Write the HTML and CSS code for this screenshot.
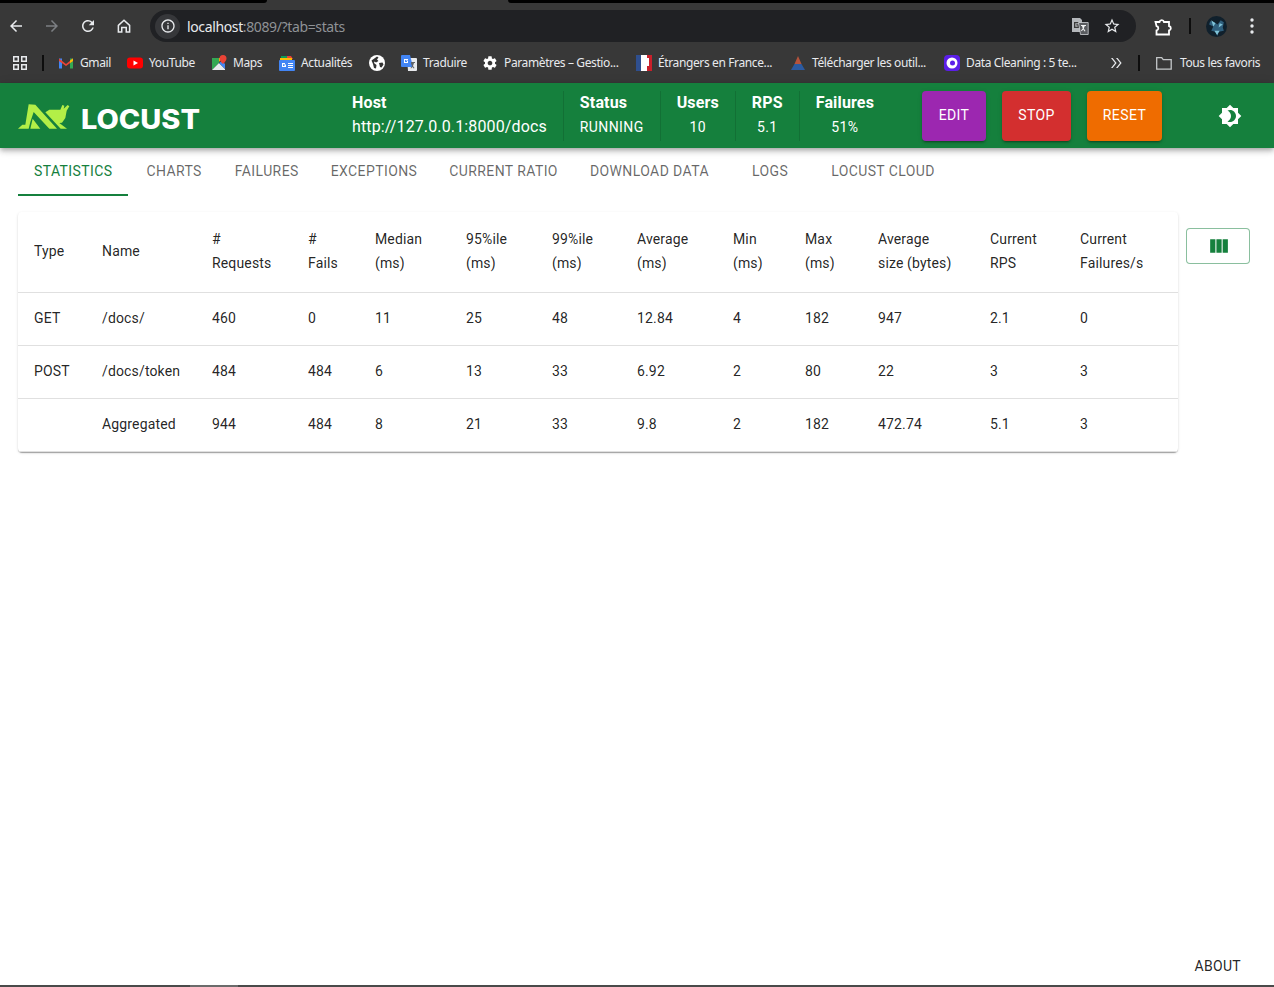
FILE: index.html
```html
<!DOCTYPE html>
<html lang="fr">
<head>
<meta charset="utf-8">
<title>Locust</title>
<link rel="stylesheet" href="styles.css">
</head>
<body>
<div class="browser">
  <div class="tabstrip"><span class="strip-a"></span><span class="strip-b"></span><span class="strip-c"></span></div>
  <div class="toolbar">
    <svg class="nav" viewBox="0 0 24 24"><path d="M20 11H7.830l5.590-5.590L12 4l-8 8 8 8 1.410-1.410L7.830 13H20v-2z"/></svg>
    <svg class="nav dim" viewBox="0 0 24 24"><path d="M12 4l-1.410 1.410L16.170 11H4v2h12.170l-5.580 5.590L12 20l8-8z"/></svg>
    <svg class="nav" viewBox="0 0 24 24"><path d="M17.650 6.350A7.958 7.958 0 0 0 12 4c-4.420 0-7.990 3.580-7.990 8s3.570 8 7.990 8c3.730 0 6.840-2.550 7.730-6h-2.080A5.990 5.990 0 0 1 12 18c-3.310 0-6-2.690-6-6s2.690-6 6-6c1.660 0 3.140.690 4.220 1.780L13 11h7V4l-2.350 2.350z"/></svg>
    <svg class="nav" viewBox="0 0 24 24"><path fill-rule="evenodd" d="M12 3L3.500 10.600V21H10v-6h4v6h6.500V10.600zM12 5.700l6.500 5.800V19H16v-6H8v6H5.500v-7.500z"/></svg>
    <div class="omnibox">
      <span class="info"><svg viewBox="0 0 24 24"><path d="M11 7h2v2h-2zm0 4h2v6h-2zm1-9C6.480 2 2 6.480 2 12s4.480 10 10 10 10-4.480 10-10S17.520 2 12 2zm0 18c-4.410 0-8-3.590-8-8s3.590-8 8-8 8 3.590 8 8-3.590 8-8 8z"/></svg></span>
      <span class="url"><span class="url-host">localhost</span><span class="url-rest">:8089/?tab=stats</span></span>
      <svg class="translate" viewBox="0 0 18 18"><path class="tr-back" d="M1 1h8l2 2v12H1z"/><path class="tr-g" d="M3 5h5v1.200H4.300v3.600h2.400V8.400H5.300V7.300H8V11H3z"/><path class="tr-front" d="M7.500 5.500h9.700v12H9.500z"/><path class="tr-mark" d="M10 8h5v1h-1.200l-1 2.500 1.700 2.500-.8.600-1.500-2-1.500 1.700-.7-.7 1.800-2-.8-2.600H10z"/></svg>
      <svg class="star" viewBox="0 0 24 24"><path d="M22 9.240l-7.190-.620L12 2 9.190 8.630 2 9.240l5.460 4.730L5.820 21 12 17.270 18.180 21l-1.630-7.030L22 9.240zM12 15.400l-3.760 2.270 1-4.280-3.320-2.880 4.380-.380L12 6.100l1.710 4.040 4.380.380-3.320 2.880 1 4.280L12 15.400z"/></svg>
    </div>
    <svg class="ext" viewBox="0 0 20 20"><path d="M2.500 6h4a2.300 2.300 0 0 1 4.500 0h5v4a2.300 2.300 0 0 1 0 4.500v4H3.500v-4a2.300 2.300 0 0 0 0-4.500z"/></svg>
    <span class="sep"></span>
    <svg class="avatar" viewBox="0 0 20 20"><circle class="av-bg" cx="10" cy="10" r="10"/><path class="av-a" d="M4 5l4 1 3 2 3-4 3 2-1 5 1 3-5 1-1 4-2-4-4-1 2-4-4-2z"/><path class="av-b" d="M5 4l4 3-2 3zM13 7l3 1-4 3zM8 14h5l-2.500 4z"/></svg>
    <svg class="menu" viewBox="0 0 4 16"><circle cx="2" cy="2" r="1.700"/><circle cx="2" cy="8" r="1.700"/><circle cx="2" cy="14" r="1.700"/></svg>
  </div>
  <div class="bookmarks">
    <svg class="apps" viewBox="0 0 14 14"><path d="M0 0h6v6H0zM1.500 1.500v3h3v-3zM8 0h6v6H8zM9.500 1.500v3h3v-3zM0 8h6v6H0zM1.500 9.500v3h3v-3zM8 8h6v6H8zM9.500 9.500v3h3v-3z" fill-rule="evenodd"/></svg>
    <span class="sep bm-sep"></span>
    <div class="bm b-gmail"><svg viewBox="0 0 16 16"><path fill="#4285f4" d="M1 3.500h3v10H1z"/><path fill="#34a853" d="M12 3.500h3v10h-3z"/><path fill="#ea4335" d="M1 3.500 8 9l7-5.500V6L8 11 1 6z"/><path fill="#fbbc04" d="M12 5.500l3-2V6l-3 2z"/></svg><span>Gmail</span></div>
    <div class="bm b-yt"><svg viewBox="0 0 16 16"><rect fill="#f00" y="2.500" width="16" height="11" rx="3"/><path fill="#fff" d="M6.500 5.500 11 8l-4.500 2.500z"/></svg><span>YouTube</span></div>
    <div class="bm b-maps"><svg viewBox="0 0 16 16"><path fill="#34a853" d="M1 3h7v5l-7 7z"/><path fill="#e8eaed" d="M1 15l7-7 6 6v1z"/><path fill="#4285f4" d="M8 8l6 6V9l-3-3z"/><path fill="#fbbc04" d="M8 3h3l-3 4z"/><path fill="#ea4335" d="M12 0a3.500 3.500 0 0 1 3.500 3.500C15.500 6 12 9 12 9S8.500 6 8.500 3.500A3.500 3.500 0 0 1 12 0z"/></svg><span>Maps</span></div>
    <div class="bm b-news"><svg viewBox="0 0 16 16"><path fill="#0c9d58" d="M2 1h9v4H2z"/><path fill="#ea4335" d="M8 1h4l2 3H8z"/><path fill="#fbbc04" d="M1 3h12v3H1z"/><rect fill="#4285f4" y="5" width="16" height="11" rx="1"/><path fill="#fff" d="M3 8h3v1H4v2h1.500v-1H4.500V9.500H7V12H3zM9 8h5v1H9zM9 10h5v1H9zM9 12h5v1H9z"/></svg><span>Actualités</span></div>
    <div class="bm b-globe"><svg viewBox="0 0 16 16"><circle fill="#fff" cx="8" cy="8" r="8"/><path fill="#333" d="M2.500 5.500 6 3l2-1.500 1.500 1L8 4.500 9.500 6 7 7.500 5.500 6.500 5 8l2.500 2-.5 3.500L5 13 4 9zM10 8l3.500-.5 1 2-2 3-1.500-.5z"/></svg></div>
    <div class="bm b-tr"><svg viewBox="0 0 16 16"><path fill="#e8eaed" d="M6 3h9a1 1 0 0 1 1 1v11a1 1 0 0 1-1 1H7z"/><path fill="#4285f4" d="M1 0h8l3 12H1a1 1 0 0 1-1-1V1a1 1 0 0 1 1-1z"/><path fill="#fff" d="M3 4h4v1H4v2h2V6H5V5.500h2V8H3z"/><path fill="#5f6368" d="M10 7h4v1h-1l-1 3 1.500 2-.8.500-1.200-1.500-1.500 1.500-.500-.6 1.500-1.600-.8-2.300H10z"/></svg><span>Traduire</span></div>
    <div class="bm b-gear"><svg viewBox="0 0 24 24"><path fill="#fff" d="M19.430 12.980c.04-.32.07-.64.07-.98s-.03-.66-.07-.98l2.110-1.650c.19-.15.240-.42.120-.64l-2-3.460c-.12-.22-.39-.3-.61-.22l-2.490 1c-.52-.4-1.080-.73-1.690-.98l-.38-2.650A.488.488 0 0 0 14 2h-4c-.25 0-.46.18-.49.420l-.38 2.650c-.61.25-1.170.59-1.690.98l-2.490-1c-.23-.09-.49 0-.61.22l-2 3.460c-.13.22-.07.49.12.640l2.110 1.650c-.04.32-.07.65-.07.98s.03.66.07.98l-2.110 1.650c-.19.15-.24.42-.12.64l2 3.460c.12.22.39.3.61.22l2.490-1c.52.4 1.080.73 1.690.98l.38 2.650c.03.24.24.42.49.42h4c.25 0 .46-.18.49-.42l.38-2.650c.61-.25 1.170-.59 1.690-.98l2.490 1c.23.09.49 0 .61-.22l2-3.460c.12-.22.07-.49-.12-.64l-2.110-1.650zM12 15.500c-1.930 0-3.500-1.570-3.500-3.500s1.570-3.500 3.500-3.500 3.500 1.570 3.500 3.500-1.570 3.500-3.500 3.500z"/></svg><span>Paramètres – Gestio...</span></div>
    <div class="bm b-fr"><svg viewBox="0 0 16 16"><path fill="#2f4f8f" d="M0 0h5v16H0z"/><path fill="#fff" d="M5 0h6v16H5z"/><path fill="#c8202b" d="M11 0h5v16h-5z"/><path fill="#fff" d="M8 3h5v8H9z"/></svg><span>Étrangers en France...</span></div>
    <div class="bm b-dl"><svg viewBox="0 0 16 16"><path fill="#b5533c" d="M8 1l3.500 8h-7z"/><path fill="#2c5aa0" d="M4.500 9h7L15 15H1z"/></svg><span>Télécharger les outil...</span></div>
    <div class="bm b-data"><svg viewBox="0 0 16 16"><rect fill="#5b1ee8" width="16" height="16" rx="4"/><circle fill="#fff" cx="8" cy="8" r="5.500"/><circle fill="#5b1ee8" cx="8.500" cy="8" r="2.500"/></svg><span>Data Cleaning : 5 te...</span></div>
    <svg class="more" viewBox="0 0 12 10"><path d="M1 0l4 5-4 5h1.600l4-5-4-5zM6 0l4 5-4 5h1.600l4-5-4-5z"/></svg>
    <span class="sep bm-sep2"></span>
    <div class="bm b-all"><svg class="folder" viewBox="0 0 16 14"><path d="M.7 1.700h5l1.500 2h8v9.500H.7z"/></svg><span>Tous les favoris</span></div>
  </div>
</div>

<header class="app-bar">
  <div class="logo">
    <svg class="logo-mark" viewBox="0 0 192 114"><path d="M18 92 31 80H40L50 19 70 20 135 92H112L65 42 55 72 50 92zM62 62 85 92H55zM100 43 112 35H145L151 21 157 23 155 32 167 21 172 25 164 38 160 60 150 74 142 75 165 92H146z"/></svg>
    <span class="logo-text">LOCUST</span>
  </div>
  <div class="stats">
    <div class="stat stat-left"><b>Host</b><span class="stat-big">http://127.0.0.1:8000/docs</span></div>
    <div class="stat stat-left"><b>Status</b><span class="stat-val">RUNNING</span></div>
    <div class="stat"><b>Users</b><span class="stat-val">10</span></div>
    <div class="stat"><b>RPS</b><span class="stat-val">5.1</span></div>
    <div class="stat"><b>Failures</b><span class="stat-val">51%</span></div>
  </div>
  <div class="actions">
    <button class="btn btn-edit">EDIT</button>
    <button class="btn btn-stop">STOP</button>
    <button class="btn btn-reset">RESET</button>
  </div>
  <svg class="theme" viewBox="0 0 24 24"><path d="M20 8.690V4h-4.690L12 .69 8.690 4H4v4.690L.69 12 4 15.310V20h4.690L12 23.310 15.310 20H20v-4.690L23.310 12 20 8.690zM12 18c-.89 0-1.740-.2-2.500-.55C11.560 16.500 13 14.420 13 12s-1.440-4.500-3.500-5.450C10.260 6.200 11.110 6 12 6c3.310 0 6 2.690 6 6s-2.690 6-6 6z"/></svg>
</header>

<nav class="tabs">
  <a class="tab active">STATISTICS</a>
  <a class="tab tab-charts">CHARTS</a>
  <a class="tab">FAILURES</a>
  <a class="tab">EXCEPTIONS</a>
  <a class="tab">CURRENT RATIO</a>
  <a class="tab">DOWNLOAD DATA</a>
  <a class="tab tab-logs">LOGS</a>
  <a class="tab tab-cloud">LOCUST CLOUD</a>
</nav>

<main class="content">
  <div class="table-card">
    <table>
      <thead>
        <tr>
          <th class="c1">Type</th><th class="c2">Name</th><th class="c3">#<br>Requests</th><th class="c4">#<br>Fails</th><th class="c5">Median<br>(ms)</th><th class="c6">95%ile<br>(ms)</th><th class="c7">99%ile<br>(ms)</th><th class="c8">Average<br>(ms)</th><th class="c9">Min<br>(ms)</th><th class="c10">Max<br>(ms)</th><th class="c11">Average<br>size (bytes)</th><th class="c12">Current<br>RPS</th><th class="c13">Current<br>Failures/s</th>
        </tr>
      </thead>
      <tbody>
        <tr><td>GET</td><td>/docs/</td><td>460</td><td>0</td><td>11</td><td>25</td><td>48</td><td>12.84</td><td>4</td><td>182</td><td>947</td><td>2.1</td><td>0</td></tr>
        <tr><td>POST</td><td>/docs/token</td><td>484</td><td>484</td><td>6</td><td>13</td><td>33</td><td>6.92</td><td>2</td><td>80</td><td>22</td><td>3</td><td>3</td></tr>
        <tr><td></td><td>Aggregated</td><td>944</td><td>484</td><td>8</td><td>21</td><td>33</td><td>9.8</td><td>2</td><td>182</td><td>472.74</td><td>5.1</td><td>3</td></tr>
      </tbody>
    </table>
  </div>
  <button class="columns-btn"><svg viewBox="0 0 24 24"><path d="M10 18h5V5h-5v13zm-6 0h5V5H4v13zM16 5v13h5V5h-5z"/></svg></button>
</main>

<footer class="foot"><a class="about">ABOUT</a></footer>
<div class="taskbar"><span class="taskbar-thumb"></span></div>
</body>
</html>
```
FILE: styles.css
```css
* { box-sizing: border-box; }
html, body { margin: 0; height: 987px; }
body {
  width: 1274px;
  overflow: hidden;
  display: flex;
  flex-direction: column;
  background: #fff;
  font-family: Roboto, "Liberation Sans", sans-serif;
  color: rgba(0, 0, 0, .87);
}

/* browser chrome */
.browser { height: 83px; flex: none; background: #383838; color: #e8eaed; }
.tabstrip { height: 3px; display: flex; }
.strip-a { width: 267px; background: #000; border-bottom-right-radius: 3px; }
.strip-b { width: 241px; }
.strip-c { flex: 1; background: #000; border-bottom-left-radius: 3px; }
.toolbar { height: 39px; padding-top: 7px; display: flex; align-items: center; fill: #e8eaed; }
.nav { width: 18px; height: 18px; flex: none; margin-left: 18px; }
.nav:first-child { margin-left: 7px; }
.nav.dim { fill: #7c7f83; }
.omnibox {
  width: 986px;
  height: 32px;
  margin-left: 17px;
  border-radius: 16px;
  background: #202124;
  display: flex;
  align-items: center;
  flex: none;
}
.info {
  width: 25px; height: 25px; margin-left: 5px; border-radius: 50%;
  background: #36373a; display: flex; align-items: center; justify-content: center; flex: none;
}
.info svg { width: 16px; height: 16px; }
.url { margin-left: 7px; font: 14px "Noto Sans", sans-serif; letter-spacing: -.37px; flex: 1; }
.url-host { color: #e8eaed; }
.url-rest { color: #8f9296; }
.translate { width: 18px; height: 18px; margin-right: 14px; }
.tr-back { fill: #b4b7bb; }
.tr-g { fill: #3a3a3a; }
.tr-front { fill: #5a5c60; stroke: #cfd2d6; stroke-width: .8; }
.tr-mark { fill: #f1f3f4; }
.star { width: 18px; height: 18px; margin-right: 15px; }
.ext { width: 20px; height: 20px; margin-left: 17px; fill: none; stroke: #fff; stroke-width: 1.800; flex: none; }
.sep { width: 2px; background: #0d0d0d; flex: none; }
.toolbar .sep { height: 16px; margin: 0 0 0 16px; }
.avatar { width: 21px; height: 21px; margin-left: 15px; flex: none; }
.av-bg { fill: #10202c; }
.av-a { fill: #2f5f7d; }
.av-b { fill: #7fc3d8; }
.menu { width: 4px; height: 16px; margin-left: 23px; flex: none; }

.bookmarks { height: 41px; display: flex; align-items: center; font: 12px "Noto Sans", sans-serif; letter-spacing: -.38px; }
.apps { width: 14px; height: 14px; margin-left: 13px; fill: #e8eaed; flex: none; }
.bm-sep { height: 16px; margin: 0 14px 0 15px; }
.bm { display: flex; align-items: center; gap: 6px; flex: none; white-space: nowrap; }
.bm svg { width: 16px; height: 16px; flex: none; }
.b-gmail { width: 69px; }
.b-yt { width: 84px; }
.b-maps { width: 68px; }
.b-news { width: 90px; }
.b-globe { width: 32px; }
.b-tr { width: 81px; }
.b-gear { width: 154px; }
.b-fr { width: 154px; }
.b-dl { width: 154px; }
.b-data { width: 166px; }
.more { width: 12px; height: 10px; fill: #e8eaed; flex: none; }
.bm-sep2 { height: 16px; margin-left: 16px; margin-right: 16px; }
.b-all { width: 110px; gap: 8px; }
.folder { fill: none; stroke: #c4c7c9; stroke-width: 1.300; }

/* app bar */
.app-bar {
  height: 65px;
  flex: none;
  background: #15803d;
  color: #fff;
  display: flex;
  align-items: center;
  position: relative;
  box-shadow: 0 2px 4px -1px rgba(0,0,0,.2), 0 4px 5px rgba(0,0,0,.14), 0 1px 10px rgba(0,0,0,.12);
}
.logo { width: 318px; padding-left: 12px; display: flex; align-items: center; flex: none; gap: 5px; }
.logo-mark { width: 64px; height: 38px; fill: #b3ef47; flex: none; margin-top: 3px; }
.logo-text { font: 800 27px/1 Inter, sans-serif; margin-top: 7px; transform: scaleX(1.07); transform-origin: left center; }
.stats { display: flex; height: 50px; margin-top: 1px; flex: none; }
.stat {
  display: flex; flex-direction: column; align-items: center;
  padding: 0 16px;
  border-left: 1px solid rgba(0,0,0,.12);
  font-size: 14px; line-height: 24px;
}
.stat:first-child { border-left: 0; padding-left: 34px; }
.stat-left { align-items: flex-start; }
.stat b { font-size: 16px; font-weight: 700; letter-spacing: .15px; }
.stat-val { letter-spacing: .4px; }
.stat-big { font-size: 16px; letter-spacing: .13px; }
.actions { display: flex; gap: 16px; margin-left: 32px; flex: none; }
.btn {
  height: 50px; border: 0; border-radius: 4px; padding: 0; color: #fff;
  font: 400 14px/1.75 Roboto, sans-serif; letter-spacing: .4px;
  box-shadow: 0 3px 1px -2px rgba(0,0,0,.2), 0 2px 2px rgba(0,0,0,.14), 0 1px 5px rgba(0,0,0,.12);
}
.btn-edit { background: #9c27b0; width: 64px; }
.btn-stop { background: #d32f2f; width: 69px; }
.btn-reset { background: #ef6c00; width: 75px; }
.theme { width: 24px; height: 24px; margin-left: 56px; fill: #fff; flex: none; }

/* tabs */
.tabs { height: 48px; flex: none; display: flex; padding-left: 18px; }
.tab {
  height: 48px; padding: 0 16px 2px; display: flex; align-items: center; justify-content: center;
  font-size: 14px; font-weight: 400; letter-spacing: .4px; color: rgba(0,0,0,.6); white-space: nowrap;
}
.tab.active { color: #15803d; border-bottom: 2px solid #15803d; padding-bottom: 0; margin-right: 2px; }
.tab-charts { margin-right: 1px; }
.tab-logs { margin-left: 11px; }
.tab-cloud { margin-left: 11px; }

/* content */
.content { flex: 1; display: flex; align-items: flex-start; padding: 16px 24px 0 18px; gap: 8px; min-height: 0; }
.table-card {
  width: 1160px; flex: none; border-radius: 4px; background: #fff;
  box-shadow: 0 2px 1px -1px rgba(0,0,0,.2), 0 1px 1px rgba(0,0,0,.14), 0 1px 3px rgba(0,0,0,.12);
}
table { width: 100%; border-collapse: collapse; table-layout: fixed; font-size: 14px; letter-spacing: .15px; }
th, td { padding: 15px 16px 17px; text-align: left; font-weight: 400; border-bottom: 1px solid #e0e0e0; line-height: 20px; }
th { line-height: 24px; }
.c1 { width: 68px; } .c2 { width: 110px; } .c3 { width: 96px; } .c4 { width: 67px; } .c5 { width: 91px; }
.c6 { width: 86px; } .c7 { width: 85px; } .c8 { width: 96px; } .c9 { width: 72px; } .c10 { width: 73px; }
.c11 { width: 112px; } .c12 { width: 90px; } .c13 { width: 114px; }
.columns-btn {
  width: 64px; height: 36px; margin-top: 16px; padding: 0; background: #fff;
  border: 1px solid rgba(21,128,61,.5); border-radius: 4px;
  display: flex; align-items: center; justify-content: center;
}
.columns-btn svg { width: 25px; height: 25px; fill: #15803d; }

/* footer */
.foot { height: 38px; flex: none; display: flex; justify-content: flex-end; padding: 7px 33px 0 0; }
.about { font-size: 14px; letter-spacing: .3px; line-height: 24px; color: rgba(0,0,0,.87); }
.taskbar { height: 2px; flex: none; background: #4a4a4a; }
.taskbar-thumb { display: block; width: 48px; height: 2px; margin-left: 190px; background: #6b6b6b; }
```
